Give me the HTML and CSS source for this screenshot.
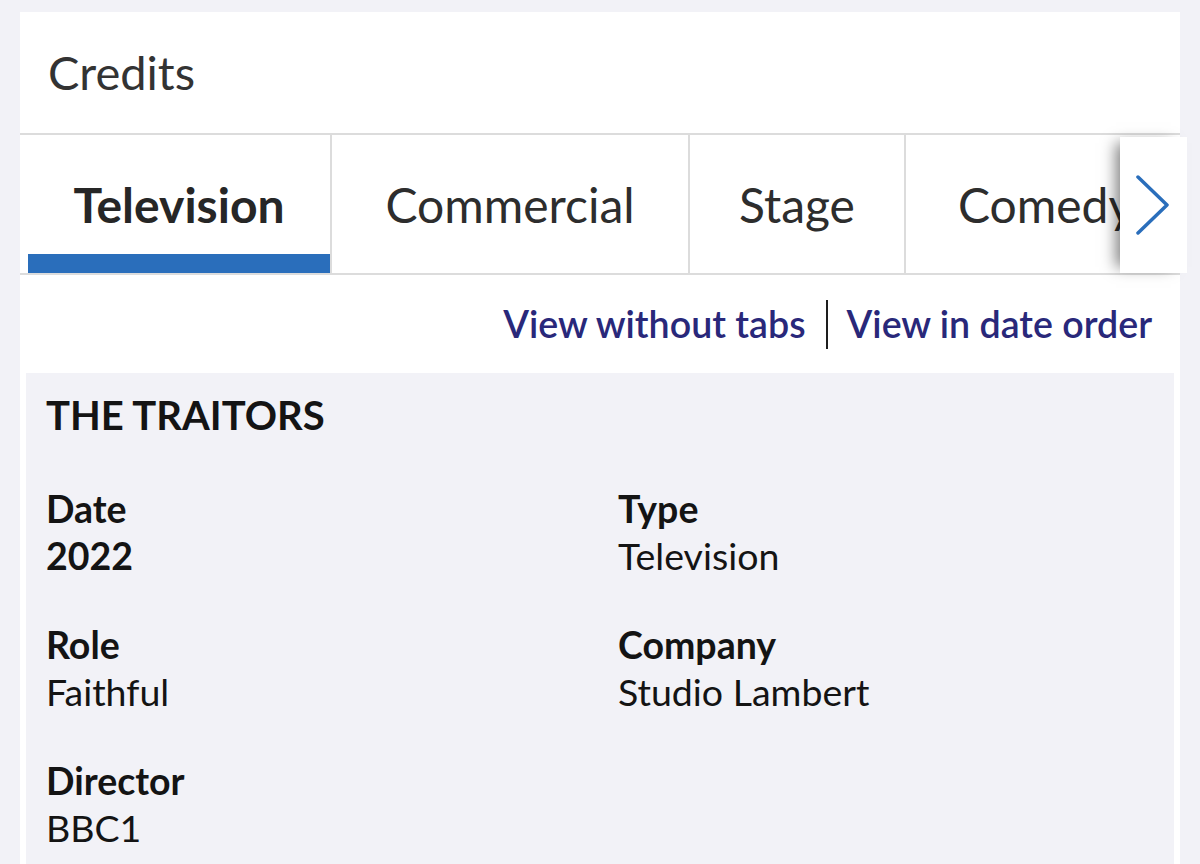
FILE: index.html
```html
<!DOCTYPE html>
<html lang="en">
<head>
<meta charset="utf-8">
<title>Credits</title>
<link rel="stylesheet" href="styles.css">
</head>
<body>
<main class="panel">
  <header class="panel-header">
    <h2 class="panel-title">Credits</h2>
  </header>

  <nav class="tabs">
    <div class="tab-strip">
      <div class="tab tab-tv is-active">Television</div>
      <div class="tab tab-commercial">Commercial</div>
      <div class="tab tab-stage">Stage</div>
      <div class="tab tab-comedy">Comedy</div>
    </div>
    <button class="tab-next" type="button" aria-label="Next">
      <svg class="chevron" width="34" height="60" viewBox="0 0 34 60" aria-hidden="true">
        <polyline points="2,2 31,30 2,58" fill="none" stroke="#2a6ebb" stroke-width="3.5" stroke-linecap="round" stroke-linejoin="round"/>
      </svg>
    </button>
  </nav>

  <div class="view-links">
    <a class="view-link" href="#">View without tabs</a>
    <span class="view-sep"></span>
    <a class="view-link" href="#">View in date order</a>
  </div>

  <section class="credit-card">
    <h3 class="credit-title">THE TRAITORS</h3>
    <dl class="credit-grid">
      <div class="field">
        <dt class="field-label">Date</dt>
        <dd class="field-value field-value-bold">2022</dd>
      </div>
      <div class="field">
        <dt class="field-label">Type</dt>
        <dd class="field-value">Television</dd>
      </div>
      <div class="field">
        <dt class="field-label">Role</dt>
        <dd class="field-value">Faithful</dd>
      </div>
      <div class="field">
        <dt class="field-label">Company</dt>
        <dd class="field-value">Studio Lambert</dd>
      </div>
      <div class="field">
        <dt class="field-label">Director</dt>
        <dd class="field-value">BBC1</dd>
      </div>
    </dl>
  </section>
</main>
</body>
</html>
```

FILE: styles.css
```css
* { box-sizing: border-box; }

html, body {
  margin: 0;
  padding: 0;
  background: #f2f2f7;
  font-family: "Lato", "Open Sans", sans-serif;
  overflow: hidden;
}

.panel {
  margin: 12px 20px 0;
  background: #ffffff;
  min-height: 852px;
}

.panel-header {
  height: 123px;
  display: flex;
  align-items: center;
  padding-left: 28px;
  border-bottom: 2px solid #dcdcdc;
}

.panel-title {
  margin: 0;
  font-size: 47px;
  font-weight: 400;
  color: #333333;
  line-height: 1.2;
}

.tabs {
  position: relative;
  height: 140px;
  border-bottom: 2px solid #dcdcdc;
}

.tab-strip {
  display: flex;
  height: 138px;
  padding-left: 8px;
  overflow: hidden;
}

.tab {
  flex: 0 0 auto;
  display: flex;
  align-items: center;
  justify-content: center;
  height: 100%;
  font-size: 48px;
  font-weight: 400;
  color: #2d2d2d;
  border-right: 2px solid #dcdcdc;
  white-space: nowrap;
}

.tab.is-active {
  font-weight: 700;
  color: #262626;
  box-shadow: inset 0 -19px 0 #2a6ebb;
}

.tab-tv { width: 304px; }
.tab-commercial { width: 358px; }
.tab-stage { width: 216px; }
.tab-comedy { width: 320px; justify-content: flex-start; padding-left: 52px; border-right: 0; }

.tab-next {
  position: absolute;
  top: 2px;
  right: -7px;
  width: 67px;
  height: 136px;
  padding: 0 0 0 16px;
  border: 0;
  background: #ffffff;
  display: flex;
  align-items: center;
  box-shadow: -10px 0 14px -6px rgba(0, 0, 0, 0.5);
}

.chevron { display: block; }

.view-links {
  height: 98px;
  display: flex;
  align-items: center;
  justify-content: flex-end;
  padding-right: 28px;
}

.view-link {
  font-size: 37.6px;
  font-weight: 600;
  color: #29287a;
  text-decoration: none;
  line-height: 1.2;
}

.view-sep {
  width: 2px;
  height: 49px;
  background: #1e1e1e;
  margin: 0 19px 0 20px;
}

.credit-card {
  margin: 0 6px;
  background: #f2f2f7;
  padding: 18px 20px 40px;
  color: #141414;
}

.credit-title {
  margin: 0 0 46px;
  font-size: 40px;
  font-weight: 700;
  line-height: 48px;
}

.credit-grid {
  margin: 0;
  display: grid;
  grid-template-columns: 572px 1fr;
  row-gap: 42px;
}

.field { margin: 0; }

.field-label,
.field-value {
  margin: 0;
  font-size: 37.5px;
  line-height: 47px;
}

.field-label { font-weight: 700; }
.field-value { font-weight: 400; }
.field-value-bold { font-weight: 700; }
```
